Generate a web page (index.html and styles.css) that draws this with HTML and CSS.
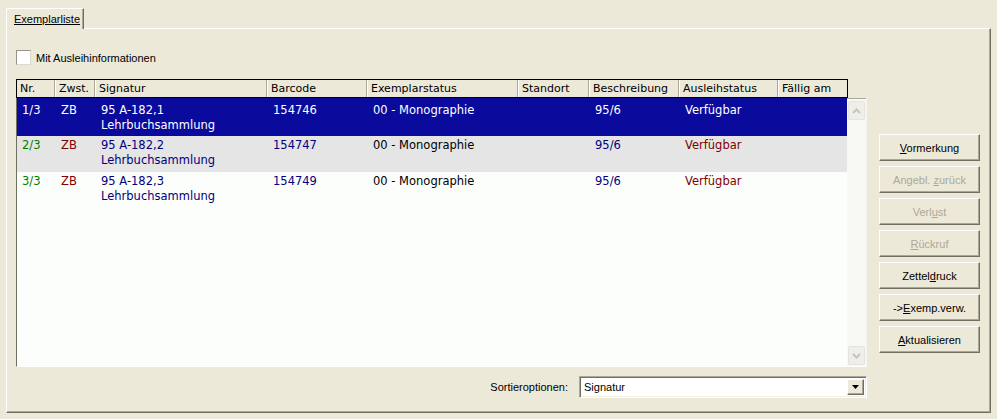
FILE: index.html
```html
<!DOCTYPE html>
<html>
<head>
    <meta charset="UTF-8">
    <title>Exemplarliste</title>
    <link rel="stylesheet" href="styles.css">
</head>
<body>

<div class="tabs">
    <div class="tab"><span class="tab-label">Exemplarliste</span></div>
</div>

<div class="panel">
    <label class="check-row"><span class="checkbox"></span>Mit Ausleihinformationen</label>

    <div class="main">
        <div class="grid">
            <div class="grid-head">
                <div class="hc">Nr.</div>
                <div class="hc">Zwst.</div>
                <div class="hc">Signatur</div>
                <div class="hc">Barcode</div>
                <div class="hc">Exemplarstatus</div>
                <div class="hc">Standort</div>
                <div class="hc">Beschreibung</div>
                <div class="hc">Ausleihstatus</div>
                <div class="hc">Fällig am</div>
            </div>
            <div class="grid-body">
                <div class="rows">
                    <div class="row sel">
                        <div class="c nr">1/3</div>
                        <div class="c zw">ZB</div>
                        <div class="c sig">95 A-182,1<br>Lehrbuchsammlung</div>
                        <div class="c bc">154746</div>
                        <div class="c st">00 - Monographie</div>
                        <div class="c"></div>
                        <div class="c bs">95/6</div>
                        <div class="c au">Verfügbar</div>
                        <div class="c"></div>
                    </div>
                    <div class="row alt">
                        <div class="c nr">2/3</div>
                        <div class="c zw">ZB</div>
                        <div class="c sig">95 A-182,2<br>Lehrbuchsammlung</div>
                        <div class="c bc">154747</div>
                        <div class="c st">00 - Monographie</div>
                        <div class="c"></div>
                        <div class="c bs">95/6</div>
                        <div class="c au">Verfügbar</div>
                        <div class="c"></div>
                    </div>
                    <div class="row">
                        <div class="c nr">3/3</div>
                        <div class="c zw">ZB</div>
                        <div class="c sig">95 A-182,3<br>Lehrbuchsammlung</div>
                        <div class="c bc">154749</div>
                        <div class="c st">00 - Monographie</div>
                        <div class="c"></div>
                        <div class="c bs">95/6</div>
                        <div class="c au">Verfügbar</div>
                        <div class="c"></div>
                    </div>
                </div>
                <div class="scrollbar">
                    <div class="sb-btn">
                        <svg width="9" height="6" viewBox="0 0 9 6"><path d="M1 5 L4.5 1.5 L8 5" fill="none" stroke="#c6c5bd" stroke-width="2"/></svg>
                    </div>
                    <div class="sb-btn">
                        <svg width="9" height="6" viewBox="0 0 9 6"><path d="M1 1 L4.5 4.5 L8 1" fill="none" stroke="#c6c5bd" stroke-width="2"/></svg>
                    </div>
                </div>
            </div>
        </div>

        <div class="buttons">
            <div class="btn"><span><u>V</u>ormerkung</span></div>
            <div class="btn off"><span>Angebl. <u>z</u>urück</span></div>
            <div class="btn off"><span>Verl<u>u</u>st</span></div>
            <div class="btn off"><span><u>R</u>ückruf</span></div>
            <div class="btn"><span>Zettel<u>d</u>ruck</span></div>
            <div class="btn"><span>-&gt;<u>E</u>xemp.verw.</span></div>
            <div class="btn"><span><u>A</u>ktualisieren</span></div>
        </div>
    </div>

    <div class="sort-row">
        <span>Sortieroptionen:</span>
        <div class="combo">
            <span class="combo-text">Signatur</span>
            <span class="combo-btn">
                <svg width="7" height="4" viewBox="0 0 7 4"><path d="M0 0 H7 L3.5 4 Z" fill="#000"/></svg>
            </span>
        </div>
    </div>
</div>

</body>
</html>
```

FILE: styles.css
```css
body {
    margin: 0;
    padding: 8px 0 0 6px;
    background-color: #ece9d8;
    font-family: "Liberation Sans", Arial, sans-serif;
    font-size: 11px;
    color: #000;
}

/* Tab strip */
.tab {
    position: relative;
    width: 78px;
    height: 21px;
    box-sizing: border-box;
    margin-bottom: -1px;
    padding: 4px 0 0 7px;
    line-height: 13px;
    background-color: #ece9d8;
    border-top: 1px solid #fff;
    border-left: 1px solid #fff;
    border-right: 1px solid #716f64;
    box-shadow: inset -1px 0 #aca899;
}

.tab-label {
    text-decoration: underline;
}

/* Tab page */
.panel {
    width: 985px;
    height: 385px;
    box-sizing: border-box;
    padding: 21px 0 0 9px;
    border: 1px solid;
    border-color: #fff #716f64 #716f64 #fff;
    box-shadow: inset -1px -1px #aca899;
}

.check-row {
    display: flex;
    align-items: center;
    gap: 5px;
    height: 15px;
    margin-bottom: 14px;
}

.checkbox {
    width: 15px;
    height: 15px;
    box-sizing: border-box;
    background-color: #fff;
    border: 1px solid;
    border-color: #96948a #dcdad0 #dcdad0 #96948a;
}

.main {
    display: flex;
    gap: 12px;
    height: 288px;
}

/* Grid */
.grid {
    width: 851px;
    display: flex;
    flex-direction: column;
    font-family: "DejaVu Sans", sans-serif;
    font-size: 11px;
}

.grid-head {
    width: 832px;
    height: 19px;
    box-sizing: border-box;
    border: 1px solid #000;
    display: grid;
    grid-template-columns: 38px 40px 172px 100px 151px 71px 90px 99px 69px;
}

.hc {
    box-sizing: border-box;
    padding-left: 3px;
    line-height: 17px;
    border-left: 1px solid #fff;
    border-right: 1px solid #aca899;
    white-space: nowrap;
    overflow: hidden;
}

.hc:first-child {
    border-left: none;
}

.hc:last-child {
    border-right: none;
}

.grid-body {
    height: 269px;
    display: flex;
    border-left: 1px solid #716f64;
    border-right: 1px solid #f4f3ee;
    border-bottom: 1px solid #fff;
}

.rows {
    width: 830px;
    background-color: #fcfefc;
}

.row {
    display: grid;
    grid-template-columns: 38px 40px 172px 100px 151px 71px 90px 99px 69px;
    height: 36px;
    box-sizing: border-box;
    padding-top: 2px;
    font-size: 11.5px;
    line-height: 15px;
}

.row.sel {
    height: 38px;
    padding-top: 5px;
    background-color: #0a0a9c;
    color: #fff;
}

.row.alt {
    background-color: #e4e5e4;
}

.c {
    padding-left: 6px;
    white-space: nowrap;
}

.c.nr {
    padding-left: 5px;
}

.row .nr { color: #008000; }
.row .zw { color: #800000; }
.row .sig, .row .bc, .row .bs { color: #000080; }
.row .au { color: #800000; }
.row.sel .c { color: #fff; }

/* Scrollbar */
.scrollbar {
    width: 19px;
    box-sizing: border-box;
    padding: 2px 1px 1px 1px;
    border-top: 1px solid #aca899;
    background-color: #f8f8f4;
    display: flex;
    flex-direction: column;
    justify-content: space-between;
}

.sb-btn {
    height: 19px;
    box-sizing: border-box;
    border: 1px solid #e4e3dc;
    border-radius: 2px;
    background-color: #efeee8;
    display: flex;
    align-items: center;
    justify-content: center;
}

/* Buttons on the right */
.buttons {
    width: 101px;
    padding-top: 55px;
    display: flex;
    flex-direction: column;
    gap: 5px;
}

.btn {
    height: 27px;
    box-sizing: border-box;
    border: 1px solid;
    border-color: #fff #716f64 #716f64 #fff;
    box-shadow: inset -1px -1px #aca899;
    display: flex;
    align-items: center;
    justify-content: center;
    white-space: nowrap;
}

.btn.off {
    color: #aca899;
}

/* Sort options */
.sort-row {
    width: 851px;
    margin-top: 9px;
    display: flex;
    justify-content: flex-end;
    align-items: center;
    gap: 11px;
}

.combo {
    width: 288px;
    height: 22px;
    box-sizing: border-box;
    border: 1px solid;
    border-color: #aca899 #fff #fff #aca899;
    box-shadow: inset 1px 1px #716f64, inset -1px -1px #f1efe2;
    background-color: #fff;
    padding: 2px 2px 2px 4px;
    display: flex;
    align-items: center;
}

.combo-text {
    flex: 1;
}

.combo-btn {
    width: 17px;
    height: 16px;
    box-sizing: border-box;
    border: 1px solid;
    border-color: #fff #716f64 #716f64 #fff;
    box-shadow: inset -1px -1px #aca899;
    background-color: #ece9d8;
    display: flex;
    align-items: center;
    justify-content: center;
}
```
